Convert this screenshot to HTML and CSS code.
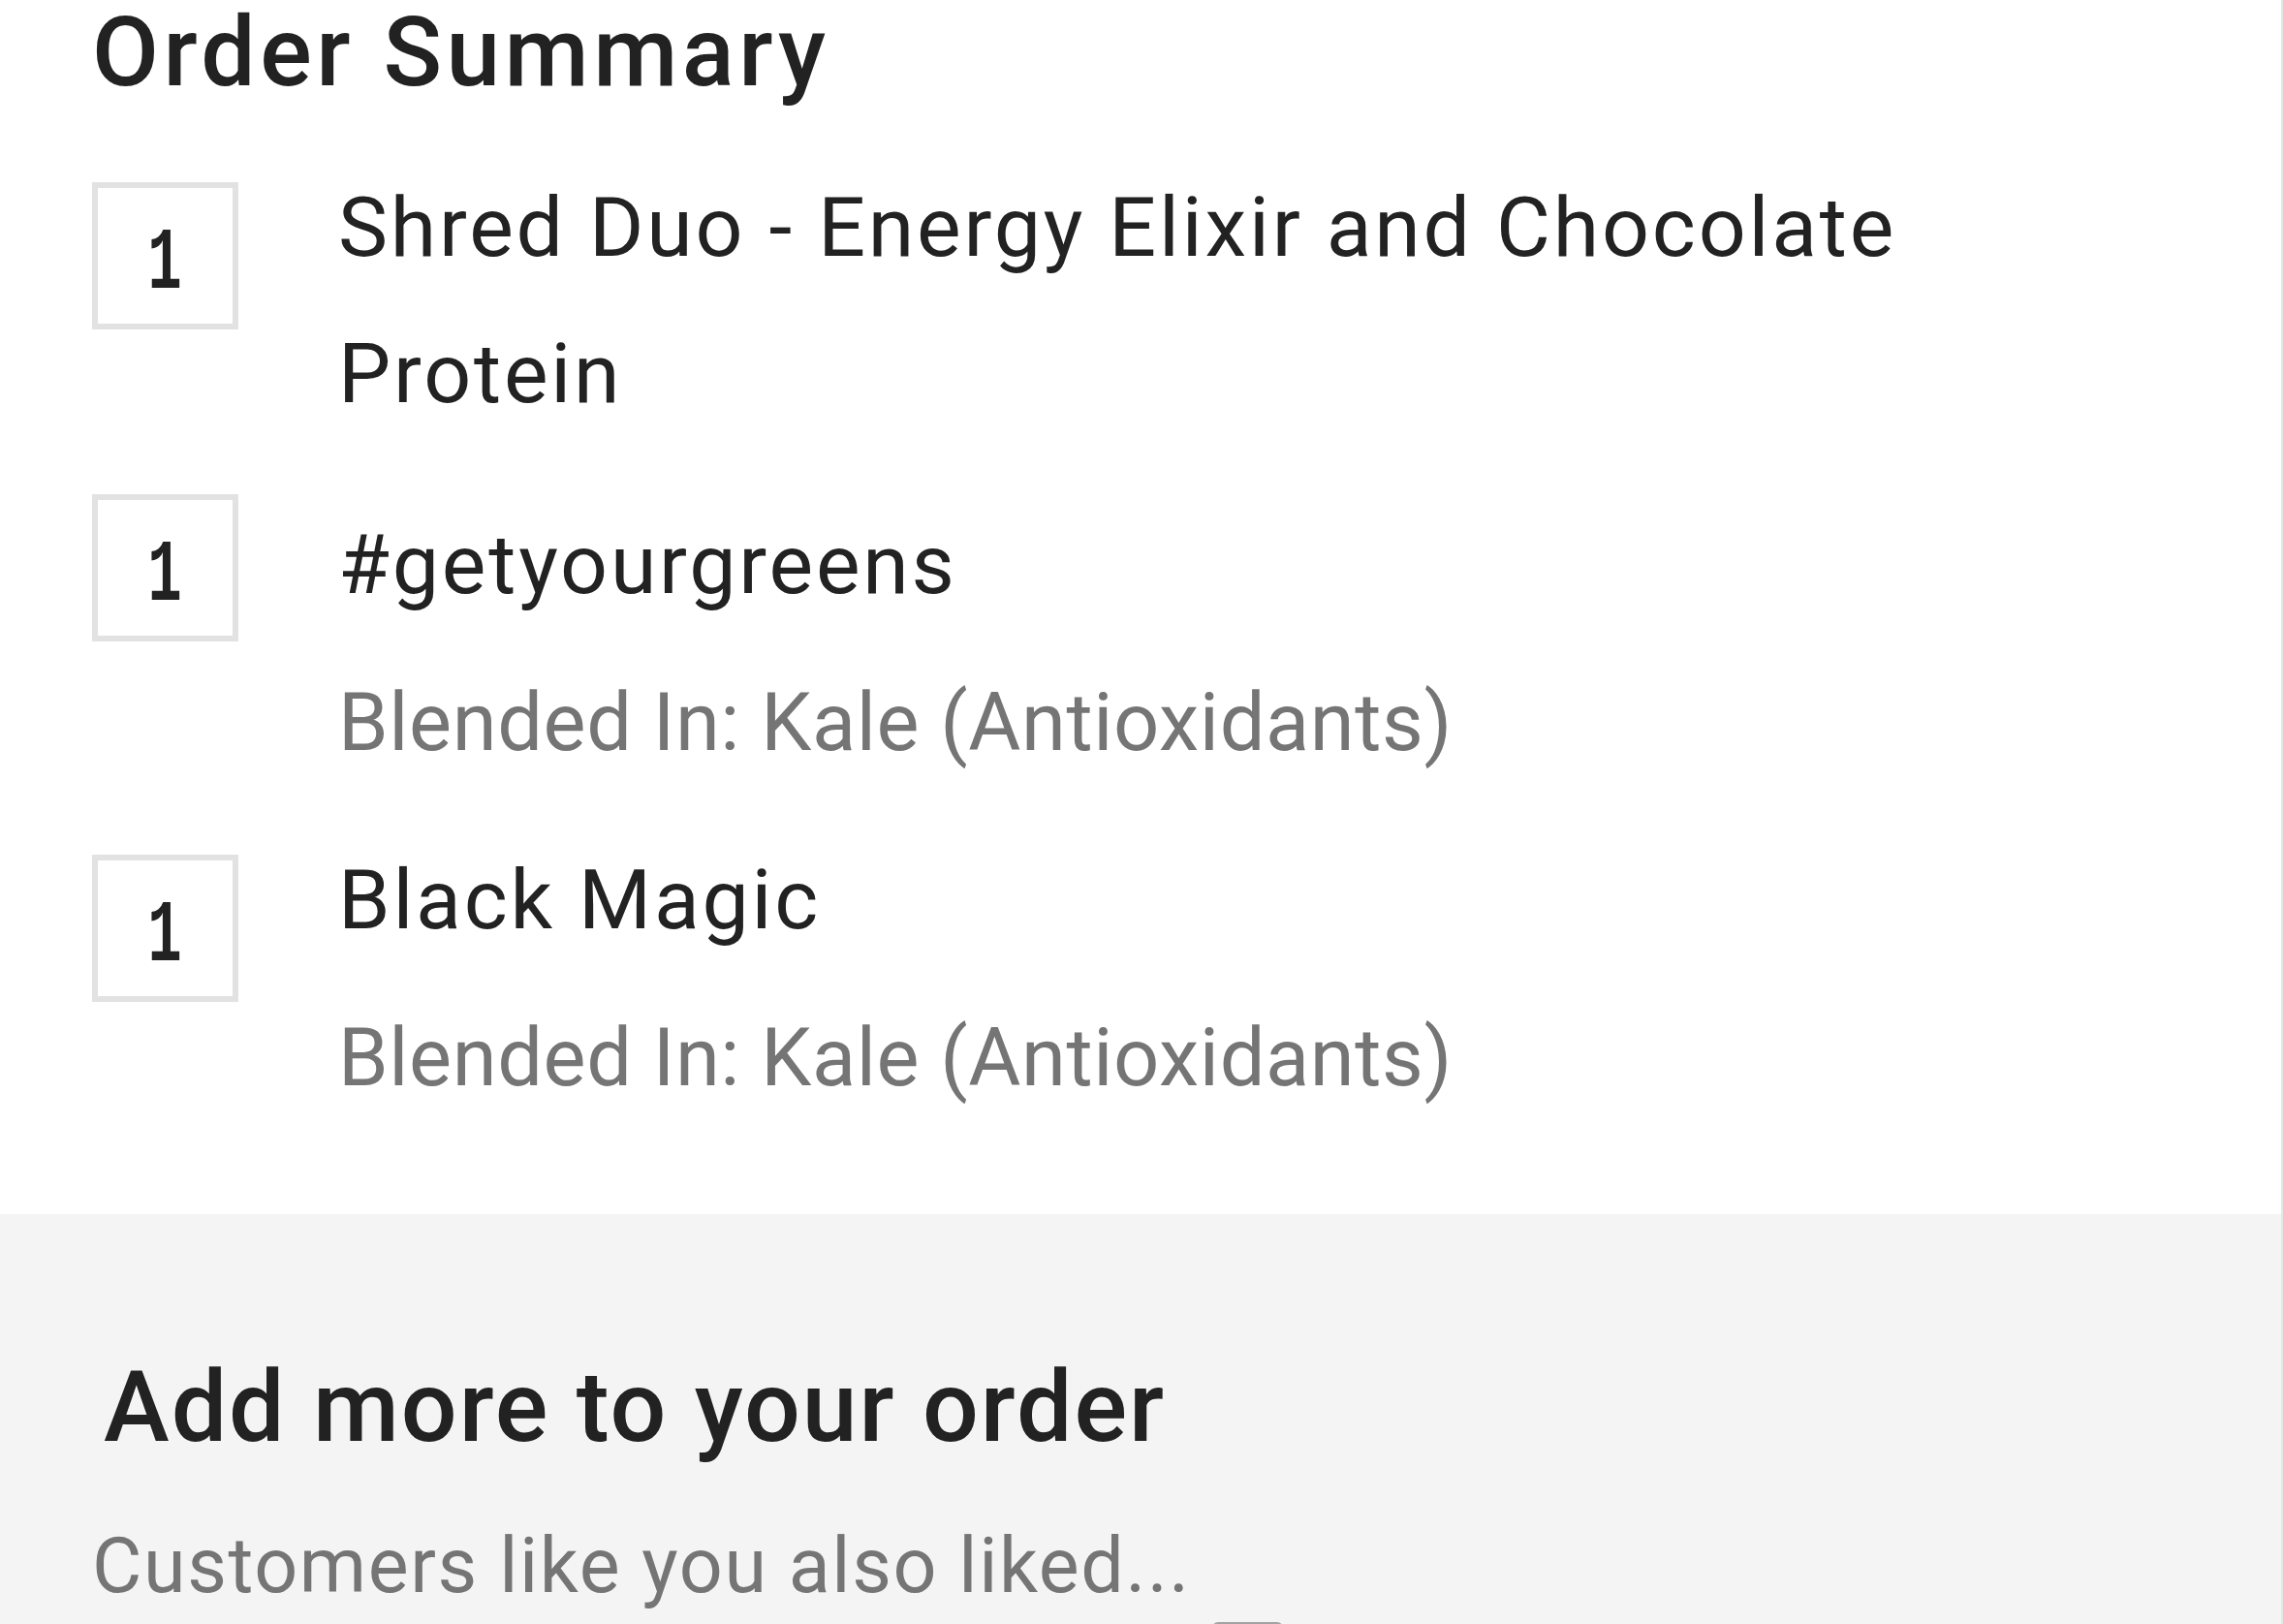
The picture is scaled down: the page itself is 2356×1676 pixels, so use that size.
FILE: index.html
```html
<!DOCTYPE html>
<html lang="en">
<head>
<meta charset="utf-8">
<title>Order Summary</title>
<link rel="stylesheet" href="styles.css">
</head>
<body>
<div class="page">
  <section class="summary">
    <h1 class="title">Order Summary</h1>
    <ul class="items">
      <li class="item">
        <div class="qty"><span class="qty-num">1</span></div>
        <div class="info">
          <div class="name">Shred Duo - Energy Elixir and Chocolate Protein</div>
        </div>
      </li>
      <li class="item item--low">
        <div class="qty"><span class="qty-num">1</span></div>
        <div class="info">
          <div class="name">#getyourgreens</div>
          <div class="option">Blended In: Kale (Antioxidants)</div>
        </div>
      </li>
      <li class="item">
        <div class="qty"><span class="qty-num">1</span></div>
        <div class="info">
          <div class="name">Black Magic</div>
          <div class="option">Blended In: Kale (Antioxidants)</div>
        </div>
      </li>
    </ul>
  </section>
  <section class="more">
    <h2 class="more-title">Add more to your order</h2>
    <p class="more-sub">Customers like you also liked...</p>
    <div class="pager"><span class="pager-bar"></span></div>
  </section>
</div>
</body>
</html>
```

FILE: styles.css
```css
html, body {
  margin: 0;
  padding: 0;
  background: #ffffff;
}

body {
  font-family: Roboto, "Liberation Sans", Arial, sans-serif;
  color: #222222;
  overflow: hidden;
}

.page {
  width: 2356px;
  height: 1676px;
  box-sizing: border-box;
  border-right: 2px solid #e6e6e6;
  overflow: hidden;
}

.summary {
  padding: 0 96px 74px 95px;
  background: #ffffff;
}

.title {
  margin: 0 0 51px 0;
  font-size: 100px;
  line-height: 108px;
  font-weight: 500;
  letter-spacing: 4.5px;
}

.items {
  list-style: none;
  margin: 0;
  padding: 0;
  display: flex;
  flex-direction: column;
  gap: 20px;
}

.item {
  display: flex;
  align-items: flex-start;
  gap: 103px;
}

.qty {
  flex: none;
  box-sizing: border-box;
  width: 151px;
  height: 152px;
  margin-top: 29px;
  padding-top: 17px;
  border: 6px solid #e2e2e2;
  display: flex;
  align-items: center;
  justify-content: center;
  color: #222222;
}

.qty-num {
  display: inline-block;
  font-family: "Liberation Mono", "DejaVu Sans Mono", monospace;
  font-size: 90px;
  font-weight: 700;
  line-height: 1;
  transform: scaleX(0.65);
}

.info {
  flex: 1;
  min-width: 0;
}

.item--low .info {
  padding-top: 26px;
}

.name {
  font-size: 86px;
  line-height: 151px;
  letter-spacing: 2.8px;
  color: #222222;
}

.option {
  margin: 12px 0;
  font-size: 83px;
  line-height: 151px;
  letter-spacing: 0.6px;
  color: #757575;
}

.more {
  background: #f4f4f4;
  padding: 148px 96px 0 95px;
  height: 423px;
}

.more-title {
  margin: 0 0 74px 0;
  padding-left: 12px;
  font-size: 102px;
  line-height: 102px;
  font-weight: 500;
  letter-spacing: 2px;
  color: #222222;
}

.more-sub {
  margin: 0;
  font-size: 79px;
  line-height: 79px;
  letter-spacing: 1.6px;
  color: #757575;
}

.pager {
  display: flex;
  justify-content: flex-start;
  margin-top: 18px;
  padding-left: 1156px;
}

.pager-bar {
  display: block;
  width: 73px;
  height: 12px;
  border-radius: 6px;
  background: #a3a3a3;
}
```
